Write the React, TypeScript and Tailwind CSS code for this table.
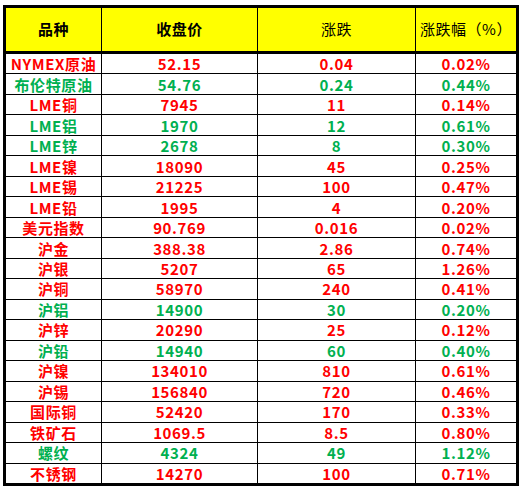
const RED = "text-[#ff0000]";
const GREEN = "text-[#00b050]";

type Row = [string, string, string, string, boolean];

const rows: Row[] = [
  ["NYMEX原油", "52.15", "0.04", "0.02%", true],
  ["布伦特原油", "54.76", "0.24", "0.44%", false],
  ["LME铜", "7945", "11", "0.14%", true],
  ["LME铝", "1970", "12", "0.61%", false],
  ["LME锌", "2678", "8", "0.30%", false],
  ["LME镍", "18090", "45", "0.25%", true],
  ["LME锡", "21225", "100", "0.47%", true],
  ["LME铅", "1995", "4", "0.20%", true],
  ["美元指数", "90.769", "0.016", "0.02%", true],
  ["沪金", "388.38", "2.86", "0.74%", true],
  ["沪银", "5207", "65", "1.26%", true],
  ["沪铜", "58970", "240", "0.41%", true],
  ["沪铝", "14900", "30", "0.20%", false],
  ["沪锌", "20290", "25", "0.12%", true],
  ["沪铅", "14940", "60", "0.40%", false],
  ["沪镍", "134010", "810", "0.61%", true],
  ["沪锡", "156840", "720", "0.46%", true],
  ["国际铜", "52420", "170", "0.33%", true],
  ["铁矿石", "1069.5", "8.5", "0.80%", true],
  ["螺纹", "4324", "49", "1.12%", false],
  ["不锈钢", "14270", "100", "0.71%", true],
];

const cols = "grid grid-cols-[95px_155px_157px_100px] gap-x-px";

export default function App() {
  return (
    <div className="w-[522px] h-[489px] bg-white pt-[5px] pl-[3px] font-['Noto_Sans_CJK_SC','Noto_Sans',sans-serif]">
      <div className="w-[516px] h-[481px] border-[3px] border-black bg-black flex flex-col">
        {/* header */}
        <div className={`${cols} h-[43px] text-[15px] text-black tracking-[0.5px]`}>
          <div className="bg-[#ffff00] flex items-center justify-center font-bold">品种</div>
          <div className="bg-[#ffff00] flex items-center justify-center font-bold">收盘价</div>
          <div className="bg-[#ffff00] flex items-center justify-center">涨跌</div>
          <div className="bg-[#ffff00] flex items-center justify-center">涨跌幅（%）</div>
        </div>
        {/* body */}
        <div className={`${cols} mt-[3px] h-[429px] grid-rows-[repeat(21,1fr)] gap-y-px`}>
          {rows.map(([name, close, chg, pct, up]) => {
            const c = up ? RED : GREEN;
            const cell = `bg-white flex items-center justify-center font-bold text-[15px] leading-none tracking-[0.6px] ${c}`;
            return [
              <div key={name + "a"} className={cell}>{name}</div>,
              <div key={name + "b"} className={cell}>{close}</div>,
              <div key={name + "c"} className={cell}>{chg}</div>,
              <div key={name + "d"} className={cell}>{pct}</div>,
            ];
          })}
        </div>
      </div>
    </div>
  );
}
